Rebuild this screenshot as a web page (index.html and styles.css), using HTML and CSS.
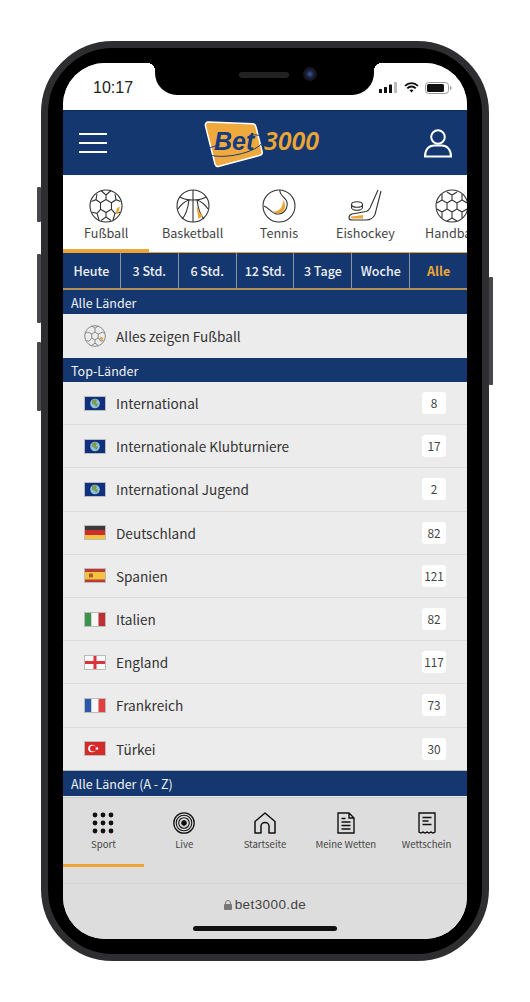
FILE: index.html

```html
<!DOCTYPE html>
<html>
<head>
    <title>Bet3000</title>
    <link rel="stylesheet" href="styles.css">
</head>
<body>
    <svg class="defs" width="0" height="0">
        <defs>
            <symbol id="flag-world" viewBox="0 0 22 15">
                <rect width="22" height="15" fill="#10307f"/>
                <circle cx="11" cy="7.500" r="4.800" fill="#8cc4dc"/>
                <path d="M8 4.500l3-1.500 2 1-1 2.500 2 2-2 3-1-2.500-3-1.500z" fill="#7f9c4c"/>
            </symbol>
        </defs>
    </svg>

    <div class="phone">
        <span class="btn btn-mute"></span>
        <span class="btn btn-up"></span>
        <span class="btn btn-down"></span>
        <span class="btn btn-power"></span>

        <div class="notch">
            <span class="speaker"></span>
            <span class="camera"></span>
        </div>

        <div class="screen">
            <div class="status">
                <span class="time">10:17</span>
                <div class="status-icons">
                    <svg width="19" height="11" viewBox="0 0 19 11"><rect x="0" y="7" width="3" height="4" rx=".6" fill="#111"/><rect x="5" y="5" width="3" height="6" rx=".6" fill="#111"/><rect x="10" y="2.500" width="3" height="8.500" rx=".6" fill="#111"/><rect x="15" y="0" width="3" height="11" rx=".6" fill="#bbb"/></svg>
                    <svg width="15" height="11" viewBox="0 0 15 11"><path d="M1 4a9 9 0 0 1 13 0M3.300 6.300a5.800 5.800 0 0 1 8.400 0" fill="none" stroke="#111" stroke-width="1.800"/><path d="M5.500 8.300a3 3 0 0 1 4 0L7.500 10.600z" fill="#111"/></svg>
                    <svg width="27" height="12" viewBox="0 0 27 12"><rect x=".5" y=".5" width="23" height="11" rx="3" fill="none" stroke="#999"/><rect x="2" y="2" width="17" height="8" rx="1.500" fill="#111"/><path d="M25 4v4c1-.3 1.500-1 1.500-2s-.5-1.700-1.500-2z" fill="#999"/></svg>
                </div>
            </div>

            <header class="topbar">
                <div class="burger"><span></span><span></span><span></span></div>
                <svg class="logo" width="122" height="50" viewBox="0 0 122 50">
                    <path d="M6 3c-2 .3-3 2-2.500 4L13 45c.7 2 2 3 4 2.300l41-11c2-.6 2.500-2 2.200-3.500L54 8c-.4-2-1.500-3-3.500-3.200z" fill="#efa93c" stroke="#fff" stroke-width="1.500"/>
                    <path d="M4 33C8 40 35 38 50 31 62 26 64 19 58 17 54 15 50 16 47 17M4 33C5 29 12 27 18 26" fill="none" stroke="#143a80" stroke-width="1"/>
                    <text x="12" y="31" class="logo-bet">Bet</text>
                    <text x="62" y="31" class="logo-num">3000</text>
                </svg>
                <svg class="user" width="30" height="30" viewBox="0 0 30 30"><circle cx="15" cy="9" r="6.800" fill="none" stroke="#fff" stroke-width="2"/><path d="M2 28.500c0-7 4-11 9-11h8c5 0 9 4 9 11z" fill="none" stroke="#fff" stroke-width="2"/></svg>
            </header>

            <nav class="sports">
                <div class="sport active">
                    <svg width="34" height="34" viewBox="0 0 34 34" class="ico">
                        <circle cx="17" cy="17" r="16"/>
                        <path d="M17 10.500l5.500 3.200v6.600L17 23.500l-5.500-3.200v-6.600zM17 10.500V6l-5-4.500M17 6l5-4.500M22.500 13.700l4.500-3 4.500 1.800M27 10.700l-1-5.700M11.500 13.700l-4.500-3-4.500 1.800M7 10.700l1-5.700M22.500 20.300l3.500 4 5-1M26 24.300l-2 6.700M11.500 20.300l-3.500 4-5-1M8 24.300l2 6.700M17 23.500V28l-5 3.500M17 28l5 3.500"/>
                        <path d="M28 19l3-1.500-1.500 6.500-3 1z" class="fill-o"/>
                    </svg>
                    <span>Fußball</span>
                </div>
                <div class="sport">
                    <svg width="34" height="34" viewBox="0 0 34 34" class="ico">
                        <circle cx="17" cy="17" r="16"/>
                        <path d="M17 1v32M4 8c6 4 20 4 26 0M2 20c4-6 8-8 11-9-1 8-3 15-7 19M32 20c-4-6-8-8-11-9 1 8 3 15 7 19"/>
                        <path d="M21 17c2 5 3 8 6 10l-5 3c1-4-2-8-1-13z" class="fill-o"/>
                    </svg>
                    <span>Basketball</span>
                </div>
                <div class="sport">
                    <svg width="34" height="34" viewBox="0 0 34 34" class="ico">
                        <circle cx="17" cy="17" r="16"/>
                        <path d="M18 1c-1 4 3 6 6 10 3 5 0 13-7 14-7 1-9-6-15-8"/>
                        <path d="M21 11c4 5 2 12-3 13-3 .7-5.500 0-7-1.500 5 .5 10-3 10-11.500z" class="fill-o"/>
                    </svg>
                    <span>Tennis</span>
                </div>
                <div class="sport">
                    <svg width="34" height="34" viewBox="0 0 34 34" class="ico">
                        <path d="M30 1L22 19c-1 2-2 3-4 3.500L4 25c-2 .5-3 2-3 4 0 1.500 1 2 3 2h14c4 0 7-1.500 9-5.500L33 2"/>
                        <ellipse cx="9" cy="15.500" rx="5.500" ry="2.800"/>
                        <path d="M3.500 15.500v3c0 1.500 2.500 2.800 5.500 2.800s5.500-1.300 5.500-2.800v-3"/>
                        <path d="M3 27.500l12-1.500v3.500H3z" class="fill-o"/>
                    </svg>
                    <span>Eishockey</span>
                </div>
                <div class="sport">
                    <svg width="34" height="34" viewBox="0 0 34 34" class="ico">
                        <circle cx="17" cy="17" r="16"/>
                        <path d="M12 3l5 3 5-3M17 6v5M12 14l5-3 5 3v6l-5 3-5-3zM12 14l-5-3V5M22 14l5-3V5M7 11l-5 3M27 11l5 3M12 20l-5 3-5-3M22 20l5 3 5-3M7 23v6M27 23v6M17 23v6l-5 3M17 29l5 3"/>
                    </svg>
                    <span>Handball</span>
                </div>
            </nav>

            <div class="times">
                <span>Heute</span>
                <span>3 Std.</span>
                <span>6 Std.</span>
                <span>12 Std.</span>
                <span>3 Tage</span>
                <span>Woche</span>
                <span class="on">Alle</span>
            </div>

            <h2 class="section">Alle Länder</h2>
            <div class="row row-all">
                <svg width="22" height="22" viewBox="0 0 34 34" class="ico thin">
                    <circle cx="17" cy="17" r="16"/>
                    <path d="M17 11l5 3v6l-5 3-5-3v-6zM17 11V5l-5-3.500M17 5l5-3.500M22 14l6-3 4 2M12 14l-6-3-4 2M22 20l4 5 4-1M12 20l-4 5-4-1M17 23v5l-5 3.500M17 28l5 3.500"/>
                    <circle cx="27" cy="21" r="2.500" class="fill-o"/>
                </svg>
                <span class="name">Alles zeigen Fußball</span>
            </div>

            <h2 class="section">Top-Länder</h2>
            <div class="list">
                <div class="row">
                    <svg class="flag" viewBox="0 0 22 15"><use href="#flag-world"/></svg>
                    <span class="name">International</span>
                    <span class="count">8</span>
                </div>
                <div class="row">
                    <svg class="flag" viewBox="0 0 22 15"><use href="#flag-world"/></svg>
                    <span class="name">Internationale Klubturniere</span>
                    <span class="count">17</span>
                </div>
                <div class="row">
                    <svg class="flag" viewBox="0 0 22 15"><use href="#flag-world"/></svg>
                    <span class="name">International Jugend</span>
                    <span class="count">2</span>
                </div>
                <div class="row">
                    <svg class="flag" viewBox="0 0 22 15"><rect width="22" height="5" fill="#3a3a3a"/><rect y="5" width="22" height="5" fill="#c9302c"/><rect y="10" width="22" height="5" fill="#f2c23e"/></svg>
                    <span class="name">Deutschland</span>
                    <span class="count">82</span>
                </div>
                <div class="row">
                    <svg class="flag" viewBox="0 0 22 15"><rect width="22" height="15" fill="#bf3a33"/><rect y="4" width="22" height="7.500" fill="#f1c33f"/><rect x="5" y="5.500" width="4" height="4" rx="1" fill="#b5562c"/></svg>
                    <span class="name">Spanien</span>
                    <span class="count">121</span>
                </div>
                <div class="row">
                    <svg class="flag" viewBox="0 0 22 15"><rect width="7.500" height="15" fill="#3f9150"/><rect x="7.500" width="7" height="15" fill="#f7f7f7"/><rect x="14.500" width="7.500" height="15" fill="#bd2f33"/></svg>
                    <span class="name">Italien</span>
                    <span class="count">82</span>
                </div>
                <div class="row">
                    <svg class="flag" viewBox="0 0 22 15"><rect width="22" height="15" fill="#fafafa"/><rect x="9.500" width="3" height="15" fill="#d8343a"/><rect y="6" width="22" height="3" fill="#d8343a"/></svg>
                    <span class="name">England</span>
                    <span class="count">117</span>
                </div>
                <div class="row">
                    <svg class="flag" viewBox="0 0 22 15"><rect width="7.500" height="15" fill="#2c56a8"/><rect x="7.500" width="7" height="15" fill="#f7f7f7"/><rect x="14.500" width="7.500" height="15" fill="#e0403f"/></svg>
                    <span class="name">Frankreich</span>
                    <span class="count">73</span>
                </div>
                <div class="row">
                    <svg class="flag" viewBox="0 0 22 15"><rect width="22" height="15" fill="#d62a2a"/><circle cx="8" cy="7.500" r="3.800" fill="#fff"/><circle cx="9" cy="7.500" r="3" fill="#d62a2a"/><circle cx="13" cy="7.500" r="1.300" fill="#fff"/></svg>
                    <span class="name">Türkei</span>
                    <span class="count">30</span>
                </div>
            </div>

            <h2 class="section section-last">Alle Länder (A - Z)</h2>

            <nav class="tabs">
                <div class="tab active">
                    <svg width="22" height="22" viewBox="0 0 22 22"><g fill="#111"><circle cx="3" cy="3" r="2.400"/><circle cx="11" cy="3" r="2.400"/><circle cx="19" cy="3" r="2.400"/><circle cx="3" cy="11" r="2.400"/><circle cx="11" cy="11" r="2.400"/><circle cx="19" cy="11" r="2.400"/><circle cx="3" cy="19" r="2.400"/><circle cx="11" cy="19" r="2.400"/><circle cx="19" cy="19" r="2.400"/></g></svg>
                    <span>Sport</span>
                </div>
                <div class="tab">
                    <svg width="22" height="22" viewBox="0 0 22 22" fill="none" stroke="#111"><circle cx="11" cy="11" r="10.200" stroke-width="1.300"/><circle cx="11" cy="11" r="7.800" stroke-width="1.100"/><circle cx="11" cy="11" r="5.300" stroke-width="1.100"/><circle cx="11" cy="11" r="2.400" fill="#111"/></svg>
                    <span>Live</span>
                </div>
                <div class="tab">
                    <svg width="22" height="22" viewBox="0 0 22 22" fill="none" stroke="#111" stroke-width="1.500"><path d="M1 21V9.500L11 1l10 8.500V21h-6v-7c0-2-1.800-3.500-4-3.500S7 12 7 14v7z" stroke-linejoin="round"/></svg>
                    <span>Startseite</span>
                </div>
                <div class="tab">
                    <svg width="22" height="22" viewBox="0 0 22 22" fill="none" stroke="#111" stroke-width="1.400"><path d="M3 1h11l5 5v15H3zM14 1v5h5M6.500 10h9M6.500 13.500h9M6.500 17h9M6.500 6.500h4"/></svg>
                    <span>Meine Wetten</span>
                </div>
                <div class="tab">
                    <svg width="22" height="22" viewBox="0 0 22 22" fill="none" stroke="#111" stroke-width="1.400"><path d="M3 1h16v19c-1.300 1.200-2.700 1.200-4 0-1.300 1.200-2.700 1.200-4 0-1.300 1.200-2.700 1.200-4 0-1.300 1.200-2.700 1.200-4 0zM6.500 5.500h9M6.500 9h6M6.500 12.500h9"/></svg>
                    <span>Wettschein</span>
                </div>
            </nav>

            <div class="urlbar">
                <svg width="8" height="10" viewBox="0 0 8 10"><path d="M1.500 4.500V3a2.500 2.500 0 0 1 5 0v1.500" fill="none" stroke="#777" stroke-width="1"/><rect y="4" width="8" height="6" rx="1" fill="#777"/></svg>
                <span>bet3000.de</span>
            </div>
            <span class="home"></span>
        </div>
    </div>
</body>
</html>
```

FILE: styles.css

```css
* {
    box-sizing: border-box;
}
body {
    margin: 0;
    background: #fff;
    font-family: "Noto Sans CJK SC", "Noto Sans", sans-serif;
    color: #333;
}
.defs {
    position: absolute;
}
.phone {
    position: relative;
    width: 448px;
    height: 920px;
    margin: 41px 0 0 41px;
    padding: 15px;
    background: #000;
    border: 7px solid #2e2e31;
    border-radius: 72px;
}
.btn {
    position: absolute;
    width: 4px;
    background: #47474b;
    border-radius: 1px;
}
.btn-mute { left: -11px; top: 139px; height: 35px; }
.btn-up { left: -11px; top: 206px; height: 69px; }
.btn-down { left: -11px; top: 294px; height: 69px; }
.btn-power { right: -11px; top: 229px; height: 108px; }

.notch {
    position: absolute;
    z-index: 2;
    left: 107px;
    top: 15px;
    width: 219px;
    height: 32px;
    background: #000;
    border-radius: 0 0 22px 22px;
}
.notch::before,
.notch::after {
    content: "";
    position: absolute;
    top: 0;
    width: 8px;
    height: 8px;
}
.notch::before {
    left: -8px;
    background: radial-gradient(circle at 0 100%, transparent 8px, #000 8px);
}
.notch::after {
    right: -8px;
    background: radial-gradient(circle at 100% 100%, transparent 8px, #000 8px);
}
.speaker {
    position: absolute;
    left: 84px;
    top: 9px;
    width: 50px;
    height: 6px;
    background: #222;
    border-radius: 3px;
}
.camera {
    position: absolute;
    left: 148px;
    top: 4px;
    width: 14px;
    height: 14px;
    background: radial-gradient(circle, #3a5aa5 0, #1a2440 35%, #14141a 60%);
    border-radius: 50%;
}

.screen {
    position: relative;
    height: 876px;
    overflow: hidden;
    background: #ececec;
    border-radius: 42px;
}
.status {
    display: flex;
    align-items: center;
    justify-content: space-between;
    height: 47px;
    padding: 2px 15px 0 30px;
    background: #fff;
}
.time {
    font-family: "Liberation Sans", sans-serif;
    font-size: 16px;
    color: #222;
}
.status-icons {
    display: flex;
    align-items: center;
    gap: 6px;
}
.topbar {
    display: flex;
    align-items: center;
    justify-content: space-between;
    height: 65px;
    padding: 0 14px 0 16px;
    background: #14376f;
    border-top: 1px solid #0e2a5c;
}
.burger {
    display: flex;
    flex-direction: column;
    gap: 7px;
    width: 28px;
}
.burger span {
    height: 2px;
    background: #fff;
}
.logo {
    margin-right: 4px;
    margin-top: 2px;
}
.logo-bet {
    font: italic 700 25px "Liberation Sans", sans-serif;
    fill: #143a80;
}
.logo-num {
    font: italic 600 25px "Noto Sans", sans-serif;
    fill: #eda636;
}

.sports {
    display: flex;
    height: 78px;
    overflow: hidden;
    background: #fff;
    border-bottom: 1px solid #e8a33d;
}
.sport {
    flex: 0 0 86.400px;
    display: flex;
    flex-direction: column;
    align-items: center;
    padding-top: 14px;
    font-size: 12.600px;
    line-height: 16px;
    white-space: nowrap;
    color: #444;
}
.sport span {
    margin-top: 2px;
}
.sport.active {
    border-bottom: 3px solid #eda636;
}
.ico {
    fill: none;
    stroke: #333;
    stroke-width: 1.100;
    flex: none;
}
.ico .fill-o {
    fill: #eda636;
    stroke: none;
}
.ico.thin {
    stroke: #777;
    stroke-width: 1.300;
}

.times {
    display: flex;
    height: 37px;
    background: #14376f;
    border-bottom: 2px solid #b58f58;
}
.times span {
    flex: 1;
    display: flex;
    align-items: center;
    justify-content: center;
    font-size: 12.500px;
    font-weight: 500;
    color: #eef0f5;
    border-right: 1px solid #8c94a3;
}
.times .on {
    border-right: 0;
    color: #eda636;
    font-weight: 700;
}

.section {
    display: flex;
    align-items: center;
    height: 24px;
    margin: 0;
    padding-left: 8px;
    background: #14376f;
    font-size: 12.500px;
    font-weight: 400;
    color: #f0f2f6;
}
.section-last {
    height: 25px;
}
.row {
    display: flex;
    align-items: center;
    gap: 10px;
    height: 43.200px;
    padding: 0 21px;
    background: #ececec;
    border-bottom: 1px solid #dcdcdc;
    font-size: 13.600px;
}
.row-all {
    height: 44px;
    border-bottom: 0;
}
.list .row:last-child {
    border-bottom: 1px solid #b8b8b8;
}
.name {
    flex: 1;
}
.flag {
    flex: none;
    width: 22px;
    height: 15px;
    outline: 1px solid #bbb;
    outline-offset: -1px;
}
.count {
    width: 24px;
    height: 22px;
    line-height: 22px;
    text-align: center;
    background: #fff;
    border-radius: 3px;
    font-size: 11.800px;
    color: #444;
}

.tabs {
    display: flex;
    height: 87px;
    margin-top: 1px;
    background: #ddd;
    border-top: 1px solid #c9c9c9;
    border-bottom: 1px solid #d2d2d2;
}
.tab {
    flex: 1;
    display: flex;
    flex-direction: column;
    align-items: center;
    gap: 3px;
    padding-top: 14px;
    font-size: 9.600px;
    line-height: 14px;
    white-space: nowrap;
    color: #444;
}
.tab.active {
    border-bottom: 3px solid #eda636;
    margin-bottom: 16px;
}
.urlbar {
    display: flex;
    align-items: center;
    justify-content: center;
    gap: 3px;
    height: 56px;
    padding-bottom: 14px;
    background: #ddd;
    font-family: "Liberation Sans", sans-serif;
    font-size: 13.500px;
    letter-spacing: .4px;
    color: #444;
}
.home {
    position: absolute;
    left: 130px;
    bottom: 8px;
    width: 144px;
    height: 5px;
    background: #111;
    border-radius: 3px;
}
```
